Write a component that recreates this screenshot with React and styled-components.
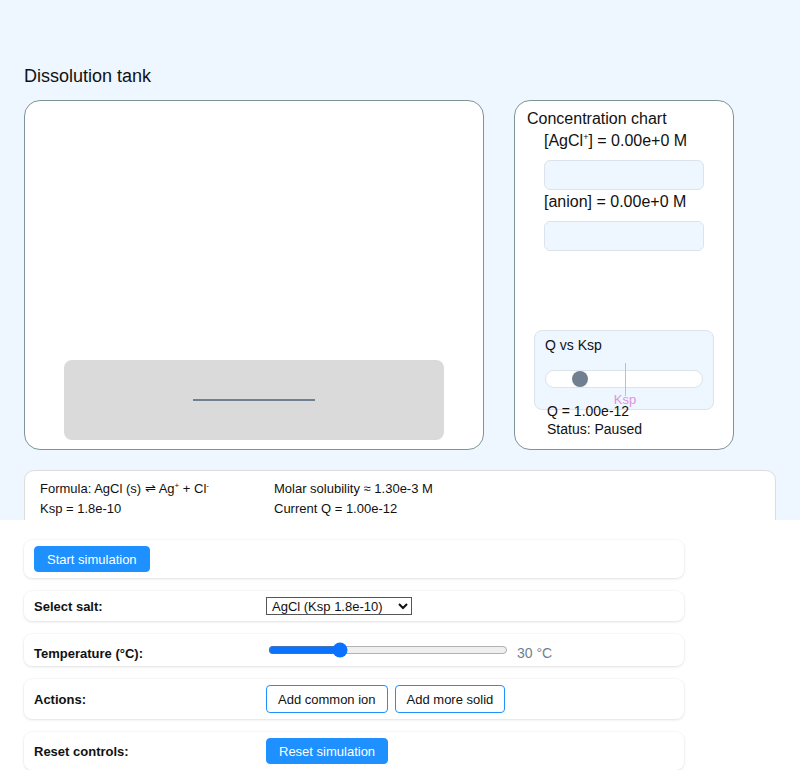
import React from 'react';
import styled, { createGlobalStyle } from 'styled-components';

const GlobalStyle = createGlobalStyle`
  html, body {
    margin: 0;
    padding: 0;
    background: #fff;
    color: #111;
    font-family: 'Liberation Sans', Arial, sans-serif;
  }
`;

const Stage = styled.section`
  height: 520px;
  overflow: hidden;
  box-sizing: border-box;
  padding: 66px 24px 0;
  background: #eef6ff;
`;

const TopRow = styled.div`
  display: grid;
  grid-template-columns: 460px 220px;
  column-gap: 30px;
  align-items: end;
`;

const Column = styled.div`
  display: flex;
  flex-direction: column;
`;

const Heading = styled.h2`
  margin: 0 0 14px;
  font-size: 18px;
  line-height: 20px;
  font-weight: 400;
`;

const Panel = styled.div`
  box-sizing: border-box;
  height: 350px;
  background: #fff;
  border: 1px solid #7f9595;
  border-radius: 16px;
  display: flex;
  flex-direction: column;
`;

const Tank = styled(Panel)`
  justify-content: flex-end;
  padding: 0 39px 9px;
`;

const SolidBase = styled.div`
  height: 80px;
  background: #dadada;
  border-radius: 8px;
  display: flex;
  align-items: center;
  justify-content: center;
`;

const Sediment = styled.div`
  width: 122px;
  height: 2px;
  background: #708090;
`;

const Chart = styled(Panel)`
  padding: 8px 12px 11px;
`;

const ChartTitle = styled.div`
  font-size: 16px;
  line-height: 20px;
`;

const Bars = styled.div`
  padding: 2px 17px 0;
  display: flex;
  flex-direction: column;
`;

const BarLabel = styled.div`
  font-size: 16px;
  line-height: 20px;
  margin-bottom: 9px;

  sup {
    font-size: 9px;
    vertical-align: 6px;
    line-height: 0;
  }
`;

const BarTrack = styled.div`
  height: 28px;
  background: #eef6ff;
  border: 1px solid #dde3ea;
  border-radius: 6px;
  margin-bottom: 2px;
`;

const Gauge = styled.div`
  position: relative;
  margin: auto 7px 0;
  height: 80px;
  box-sizing: border-box;
  padding: 5px 10px 0;
  background: #eef6ff;
  border: 1px solid #dde3ea;
  border-radius: 8px;
`;

const GaugeTitle = styled.div`
  font-size: 14px;
  line-height: 18px;
`;

const GaugeTrack = styled.div`
  position: relative;
  margin-top: 16px;
  height: 16px;
  background: #fff;
  border: 1px solid #dde3ea;
  border-radius: 9px;
`;

const GaugeDot = styled.div`
  position: absolute;
  top: 0;
  width: 16px;
  height: 16px;
  border-radius: 50%;
  background: #708090;
  transform: translateX(-50%);
`;

const KspMark = styled.div`
  position: absolute;
  top: -8px;
  width: 1px;
  height: 33px;
  background: #e3a6e3;
`;

const KspText = styled.span`
  position: absolute;
  top: 21px;
  transform: translateX(-50%);
  font-size: 13px;
  color: #df92df;
`;

const Readout = styled.div`
  position: relative;
  margin: -8px 0 0 20px;
  font-size: 14px;
  line-height: 18px;
`;

const InfoBox = styled.div`
  margin-top: 20px;
  box-sizing: border-box;
  height: 80px;
  background: #fff;
  border: 1px solid #dcdcdc;
  border-radius: 10px;
  padding: 8px 15px;
  display: grid;
  grid-template-columns: 234px 1fr;
  align-content: start;
  font-size: 13px;
  line-height: 20px;

  sup {
    font-size: 8px;
    vertical-align: 5px;
    line-height: 0;
  }
`;

const Controls = styled.section`
  padding: 20px 24px 0;
  width: 660px;
  display: flex;
  flex-direction: column;
  gap: 13px;
`;

const Card = styled.div`
  display: grid;
  grid-template-columns: 220px 1fr;
  column-gap: 12px;
  align-items: center;
  padding: 6px 10px;
  background: #fff;
  border-radius: 8px;
  box-shadow: 0 1px 3px rgba(0, 0, 0, 0.1), 0 0 0 1px rgba(0, 0, 0, 0.02);
`;

const Label = styled.span`
  font-size: 13px;
  font-weight: 700;
  margin: ${(p) => p.$drop || 0}px 0 -${(p) => p.$drop || 0}px;
`;

const Field = styled.div`
  display: flex;
  align-items: center;
  gap: 7px;
`;

const Button = styled.button`
  height: ${(p) => (p.$outline ? 28 : 26)}px;
  padding: 0 ${(p) => (p.$outline ? 11 : 12)}px;
  font: 13px 'Liberation Sans', Arial, sans-serif;
  border-radius: 4px;
  cursor: pointer;
  border: 1px solid #1e90ff;
  background: ${(p) => (p.$outline ? '#fff' : '#1e90ff')};
  color: ${(p) => (p.$outline ? '#111' : '#fff')};
`;

const Select = styled.select`
  width: 146px;
  font: 13px 'Liberation Sans', Arial, sans-serif;
  height: 18px;
  padding: 0 1px;
  border: 1px solid #555;
  border-radius: 0;
  background: #fff;
  color: #111;
`;

const Range = styled.input`
  width: 240px;
  height: 16px;
  margin: 2px;
  accent-color: #0a72ff;
`;

const Unit = styled.span`
  font-size: 14px;
  color: #708090;
  margin: 3px 0 -3px;
`;

const App = () => {
  const qPos = 34;
  const kspPos = 79;

  return (
    <>
      <GlobalStyle />
      <Stage>
        <TopRow>
          <Column>
            <Heading>Dissolution tank</Heading>
            <Tank>
              <SolidBase>
                <Sediment />
              </SolidBase>
            </Tank>
          </Column>
          <Chart>
            <ChartTitle>Concentration chart</ChartTitle>
            <Bars>
              <BarLabel>[AgCl<sup>+</sup>] = 0.00e+0 M</BarLabel>
              <BarTrack />
              <BarLabel>[anion] = 0.00e+0 M</BarLabel>
              <BarTrack />
            </Bars>
            <Gauge>
              <GaugeTitle>Q vs Ksp</GaugeTitle>
              <GaugeTrack>
                <GaugeDot style={{ left: `${qPos}px` }} />
                <KspMark style={{ left: `${kspPos}px` }} />
                <KspText style={{ left: `${kspPos}px` }}>Ksp</KspText>
              </GaugeTrack>
            </Gauge>
            <Readout>
              <div>Q = 1.00e-12</div>
              <div>Status: Paused</div>
            </Readout>
          </Chart>
        </TopRow>
        <InfoBox>
          <span>Formula: AgCl (s) ⇌ Ag<sup>+</sup> + Cl<sup>-</sup></span>
          <span>Molar solubility ≈ 1.30e-3 M</span>
          <span>Ksp = 1.8e-10</span>
          <span>Current Q = 1.00e-12</span>
        </InfoBox>
      </Stage>
      <Controls>
        <Card>
          <Field>
            <Button>Start simulation</Button>
          </Field>
        </Card>
        <Card>
          <Label>Select salt:</Label>
          <Field>
            <Select defaultValue="agcl">
              <option value="agcl">AgCl (Ksp 1.8e-10)</option>
              <option value="baso4">BaSO4 (Ksp 1.1e-10)</option>
              <option value="caf2">CaF2 (Ksp 3.9e-11)</option>
            </Select>
          </Field>
        </Card>
        <Card>
          <Label $drop={3}>Temperature (°C):</Label>
          <Field>
            <Range type="range" min="10" max="80" defaultValue="30" />
            <Unit>30 °C</Unit>
          </Field>
        </Card>
        <Card>
          <Label>Actions:</Label>
          <Field>
            <Button $outline>Add common ion</Button>
            <Button $outline>Add more solid</Button>
          </Field>
        </Card>
        <Card>
          <Label>Reset controls:</Label>
          <Field>
            <Button>Reset simulation</Button>
          </Field>
        </Card>
      </Controls>
    </>
  );
};

export default App;
